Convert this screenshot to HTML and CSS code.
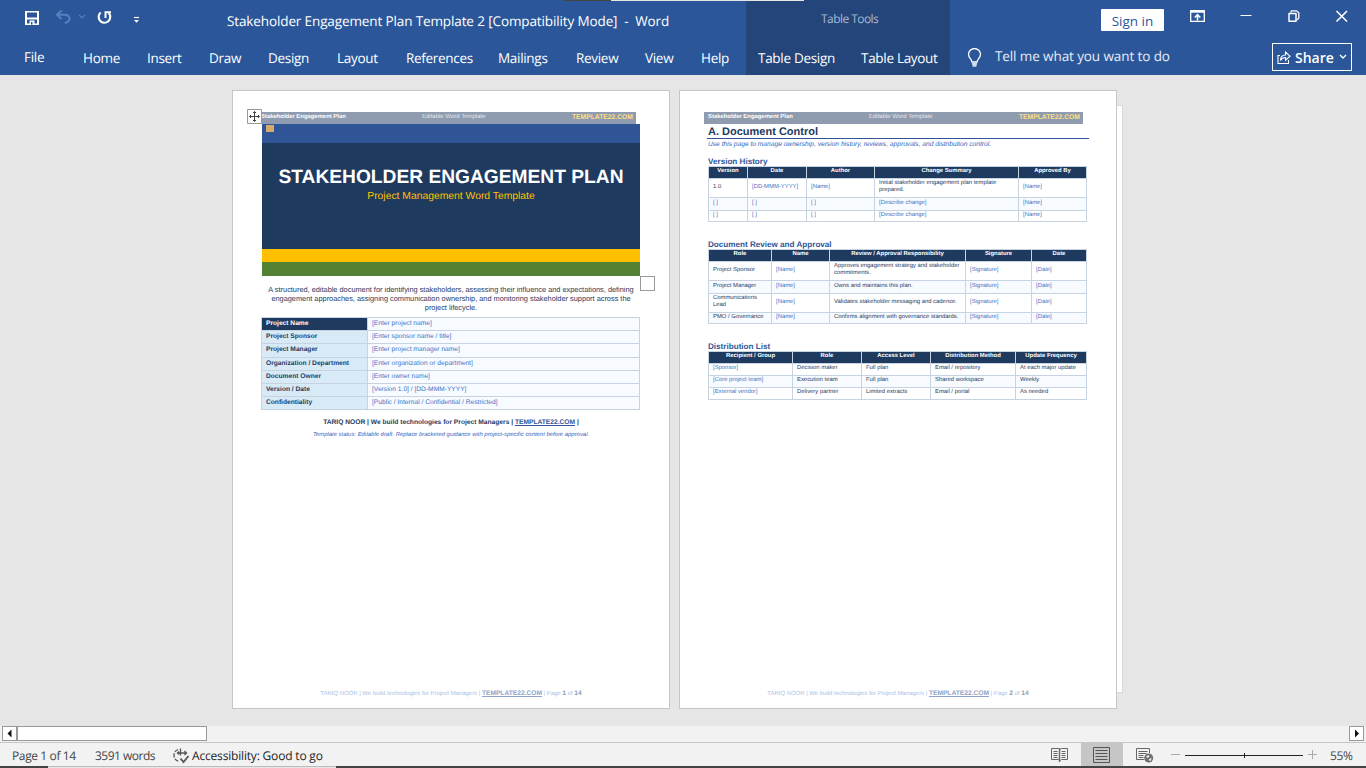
FILE: index.html
```html
<!DOCTYPE html>
<html lang="en">
<head>
<meta charset="utf-8">
<title>Stakeholder Engagement Plan Template 2 - Word</title>
<link rel="stylesheet" href="styles.css">
</head>
<body>
<div class="app">
  <header class="ribbon">
    <div class="top-strip"></div>
    <div class="main-zone">
      <div class="title-row">
        <svg class="qat" width="130" height="36" viewBox="0 0 130 36" fill="none">
          <path fill="#fff" fill-rule="evenodd" d="M2 11h14v14H2zM4 12.500v5h10v-5zM4 19.500v4h2.500v-3h5v3H14v-4zM8 22v2.500h1.500V22z"/>
          <g stroke="#5580bf"><path d="M38.500 10.500l-4.500 4.300 4.500 4.200M34.500 14.800h7c5.500 0 6.500 5 3 7l-2.500 1.500" stroke-width="2"/><path d="M56 15l3 3 3-3" stroke-width="1.200"/></g>
          <path d="M77.700 12.500a5.800 5.800 0 1 0 8 .5" stroke="#fff" stroke-width="2.100"/><path d="M82.500 18v-5.800h5.500" stroke="#fff" stroke-width="2"/>
          <path d="M111 17.500h5" stroke="#fff" stroke-width="1.200"/><path d="M111 20h5l-2.500 2.800z" fill="#fff"/>
        </svg>
        <div class="doc-title">Stakeholder Engagement Plan Template 2 [Compatibility Mode]&nbsp; -&nbsp; Word</div>
      </div>
      <nav class="tabs"><span class="file">File</span><span>Home</span><span>Insert</span><span>Draw</span><span>Design</span><span>Layout</span><span>References</span><span>Mailings</span><span>Review</span><span>View</span><span>Help</span></nav>
    </div>
    <div class="context-zone">
      <div class="context-title">Table Tools</div>
      <nav class="tabs context-tabs"><span>Table Design</span><span>Table Layout</span></nav>
    </div>
    <div class="right-zone">
      <div class="window-row">
        <button class="sign-in">Sign in</button>
        <svg class="window-icons" width="170" height="32" viewBox="0 0 170 32" fill="none" stroke="#fff">
          <path d="M.7 10.700h13.600v10.600H.7z" stroke-width="1.300"/><path d="M1 11.500h13" stroke-width="2.400"/><path d="M7.500 20.500v-5M4.700 17.500l2.800-2.800 2.800 2.800" stroke-width="1.600"/>
          <path d="M50.500 15.500h11"/>
          <path d="M99 13.500h7v7.700h-7z" stroke-width="1.500" stroke-linejoin="round"/><path d="M100.500 12.500l1-1.700h5l2.300 2v5.500l-2 1.700" stroke-width="1.300"/>
          <path d="M146.500 11l10.500 10.500M157 11l-10.500 10.500" stroke-width="1.600"/>
        </svg>
      </div>
      <div class="tell-row">
        <svg width="15" height="20" viewBox="0 0 15 20" fill="none" stroke="#fff" stroke-width="1.300"><path d="M5 14c0-3-3.500-4-3.500-7.500a6 6 0 0 1 12 0C13.500 10 10 11 10 14z"/><path d="M5 15.700h5M5.500 17.700h4" stroke-width="2" stroke="#d0dbec"/></svg>
        <span class="tell">Tell me what you want to do</span>
        <button class="share">
          <svg width="14" height="14" viewBox="0 0 14 14" fill="none" stroke="#fff" stroke-width="1.100"><path d="M3 5.500H1v8h10.500V10"/><path d="M3.500 10.500c0-4 2-5.500 5-5.500V2l4.500 4.200-4.500 4V7.500c-2.500 0-4 1-5 3z"/></svg>
          <span>Share</span>
          <svg width="8" height="8" viewBox="0 0 8 8" fill="none" stroke="#fff" stroke-width="1.300"><path d="M1 2l3 3 3-3"/></svg>
        </button>
      </div>
    </div>
  </header>

  <main class="workspace">
    <div class="page">
      <div class="band"><b>Stakeholder Engagement Plan</b><span>Editable Word Template</span><b class="brand">TEMPLATE22.COM</b></div>
      <div class="cover">
        <div class="cover-blue"><i></i></div>
        <div class="cover-navy"><h1>STAKEHOLDER ENGAGEMENT PLAN</h1><p>Project Management Word Template</p></div>
        <div class="cover-yellow"></div>
        <div class="cover-green"></div>
        <svg class="move-handle" width="15" height="15" viewBox="0 0 15 15" fill="none" stroke="#444"><path d="M.5.500h14v14H.5z" fill="#fff" stroke="#999"/><path d="M7.500 2.500v10M2.500 7.500h10M6 4l1.500-1.500L9 4M6 11l1.500 1.500L9 11M4 6L2.500 7.500 4 9M11 6l1.500 1.500L11 9"/></svg>
        <div class="size-handle"></div>
      </div>
      <p class="intro">A structured, editable document for identifying stakeholders, assessing their influence and expectations, defining<br>engagement approaches, assigning communication ownership, and monitoring stakeholder support across the<br>project lifecycle.</p>
      <div class="info">
        <b class="dark">Project Name</b><span>[Enter project name]</span>
        <b>Project Sponsor</b><span>[Enter sponsor name / title]</span>
        <b>Project Manager</b><span>[Enter project manager name]</span>
        <b>Organization / Department</b><span>[Enter organization or department]</span>
        <b>Document Owner</b><span>[Enter owner name]</span>
        <b>Version / Date</b><span>[Version 1.0] / [DD-MMM-YYYY]</span>
        <b>Confidentiality</b><span>[Public / Internal / Confidential / Restricted]</span>
      </div>
      <p class="signature">TARIQ NOOR | We build technologies for Project Managers | <u>TEMPLATE22.COM</u> |</p>
      <p class="status-note">Template status: Editable draft. Replace bracketed guidance with project-specific content before approval.</p>
      <div class="page-foot">TARIQ NOOR | We build technologies for Project Managers | <u>TEMPLATE22.COM</u> | Page <b>1</b> of <b>14</b></div>
    </div>

    <div class="page">
      <div class="band"><b>Stakeholder Engagement Plan</b><span>Editable Word Template</span><b class="brand">TEMPLATE22.COM</b></div>
      <h2 class="section">A. Document Control</h2>
      <p class="note">Use this page to manage ownership, version history, reviews, approvals, and distribution control.</p>
      <h3 class="first">Version History</h3>
      <div class="grid versions">
        <b>Version</b><b>Date</b><b>Author</b><b>Change Summary</b><b>Approved By</b>
        <span>1.0</span><span class="ph">[DD-MMM-YYYY]</span><span class="ph">[Name]</span><span class="two">Initial stakeholder engagement plan template prepared.</span><span class="ph">[Name]</span>
        <span class="ph alt">[ ]</span><span class="ph alt">[ ]</span><span class="ph alt">[ ]</span><span class="ph alt">[Describe change]</span><span class="ph alt">[Name]</span>
        <span class="ph">[ ]</span><span class="ph">[ ]</span><span class="ph">[ ]</span><span class="ph">[Describe change]</span><span class="ph">[Name]</span>
      </div>
      <h3>Document Review and Approval</h3>
      <div class="grid reviews">
        <b>Role</b><b>Name</b><b>Review / Approval Responsibility</b><b>Signature</b><b>Date</b>
        <span>Project Sponsor</span><span class="ph">[Name]</span><span class="two">Approves engagement strategy and stakeholder commitments.</span><span class="ph">[Signature]</span><span class="ph">[Date]</span>
        <span class="alt">Project Manager</span><span class="ph alt">[Name]</span><span class="alt">Owns and maintains this plan.</span><span class="ph alt">[Signature]</span><span class="ph alt">[Date]</span>
        <span class="two">Communications Lead</span><span class="ph">[Name]</span><span>Validates stakeholder messaging and cadence.</span><span class="ph">[Signature]</span><span class="ph">[Date]</span>
        <span class="alt">PMO / Governance</span><span class="ph alt">[Name]</span><span class="alt">Confirms alignment with governance standards.</span><span class="ph alt">[Signature]</span><span class="ph alt">[Date]</span>
      </div>
      <h3>Distribution List</h3>
      <div class="grid recipients">
        <b>Recipient / Group</b><b>Role</b><b>Access Level</b><b>Distribution Method</b><b>Update Frequency</b>
        <span class="ph">[Sponsor]</span><span>Decision maker</span><span>Full plan</span><span>Email / repository</span><span>At each major update</span>
        <span class="ph alt">[Core project team]</span><span class="alt">Execution team</span><span class="alt">Full plan</span><span class="alt">Shared workspace</span><span class="alt">Weekly</span>
        <span class="ph">[External vendor]</span><span>Delivery partner</span><span>Limited extracts</span><span>Email / portal</span><span>As needed</span>
      </div>
      <div class="page-foot">TARIQ NOOR | We build technologies for Project Managers | <u>TEMPLATE22.COM</u> | Page <b>2</b> of <b>14</b></div>
    </div>
    <div class="next-page"></div>
  </main>

  <div class="scrollbar">
    <div class="arrow"><svg width="13" height="13" viewBox="0 0 13 13"><path d="M8.500 2.500v8L4.500 6.500z" fill="#111"/></svg></div>
    <div class="thumb"></div>
    <div class="track"></div>
    <div class="arrow"><svg width="13" height="13" viewBox="0 0 13 13"><path d="M5 2.500v8l4-4z" fill="#111"/></svg></div>
  </div>

  <footer class="statusbar">
    <span class="s-page">Page 1 of 14</span>
    <span class="s-words">3591 words</span>
    <svg class="s-icon" width="18" height="17" viewBox="0 0 18 17" fill="none" stroke="#555" stroke-width="1.300"><path d="M5 1.500C2.500 2.500 1 4.500 1 7.500c0 3 2 5.200 5 5.700" stroke-dasharray="4 1.500"/><path d="M7.500.500v7M5 5h8M6 3.500L4.500 5 6 6.500M11.500 3L13.500 5l-2 2"/><path d="M7.500 10.500l3 3.500 5-6" stroke-width="1.800"/></svg>
    <span class="s-access">Accessibility: Good to go</span>
    <div class="views">
      <svg class="read" width="18" height="16" viewBox="0 0 18 16" fill="none" stroke="#666"><path d="M.5 1.500h7l1.500 1 1.500-1h6v11h-6l-1.500 1-1.500-1h-7zM2.500 4.500h4M2.500 6.500h4M2.500 8.500h4M2.500 10.500h4M10.500 4.500h4M10.500 6.500h4M10.500 8.500h4M10.500 10.500h4"/><path d="M8.500 1v14" stroke-width="1.400"/></svg>
      <div class="selected"><svg width="17" height="16" viewBox="0 0 17 16" fill="none" stroke="#555"><path d="M.5.500h16v15H.5zM2.500 3.500h12M2.500 6.500h12M2.500 9.500h12M2.500 12.500h12"/></svg></div>
      <svg class="web" width="18" height="16" viewBox="0 0 18 16" fill="none" stroke="#666"><path d="M8 12.500H.5V1.500h13V6M2.500 4.500h9M2.500 6.500h8M2.500 8.500h5M2.500 10.500h5"/><circle cx="12.700" cy="11" r="4.500" fill="#707070" stroke="none"/><path d="M10 9.500l2.500-1.500 1 1.500-2 1.500zM13 12l2.500-1-.5 2.500-1.500.5z" fill="#f2f2f2" stroke="none"/></svg>
      <svg class="slider" width="148" height="16" viewBox="0 0 148 16" fill="none"><path d="M1 7.500h9M138 7.500h9M142.500 3v9" stroke="#aaa"/><path d="M15 8.500h118M74.500 6v5" stroke="#222"/></svg>
      <span class="pct">55%</span>
    </div>
  </footer>
  <div class="taskbar-edge"><i></i></div>
</div>
</body>
</html>
```
FILE: styles.css
```css
* { box-sizing: border-box; margin: 0; padding: 0; }
body { width: 1366px; height: 768px; overflow: hidden; font-family: "Open Sans", "Noto Sans", sans-serif; text-rendering: geometricPrecision; }
button { font: inherit; border: 0; }
svg { display: block; flex: none; }
.app { display: flex; flex-direction: column; height: 768px; }

.ribbon { position: relative; display: flex; height: 75px; background: #2b579a; color: #fff; }
.top-strip { position: absolute; left: 563px; top: 0; width: 241px; height: 1px; background: linear-gradient(90deg, #444 48px, #e6e6e6 48px); }
.main-zone { width: 746px; }
.title-row { display: flex; height: 42px; }
.qat { margin-left: 23px; }
.doc-title { margin-left: 74px; line-height: 42px; font-size: 13.500px; letter-spacing: -0.120px; white-space: nowrap; }
.tabs { display: grid; grid-template-columns: 59px 64px 62px 59px 69px 69px 92px 78px 69px 56px 45px; padding-left: 24px; line-height: 33px; font-size: 13.500px; letter-spacing: -0.300px; white-space: nowrap; }
.file { line-height: 31px; }
.context-zone { width: 204px; background: #234579; }
.context-title { height: 42px; padding-left: 75px; line-height: 38px; font-size: 12px; letter-spacing: -0.550px; color: #a8b9d4; }
.context-tabs { grid-template-columns: 103px 90px; padding-left: 12px; }
.right-zone { flex: 1; }
.window-row { display: flex; height: 42px; padding-left: 151px; }
.sign-in { width: 63px; height: 22px; margin-top: 9px; background: #fff; color: #2b579a; font-size: 13.500px; line-height: 24px; border-radius: 1px; }
.window-icons { margin-left: 26px; }
.tell-row { display: flex; height: 33px; padding-left: 17px; }
.tell-row > svg { margin-top: 6px; }
.tell { width: 277px; margin-left: 13px; line-height: 29px; font-size: 13.500px; letter-spacing: -0.100px; color: #e6ecf5; }
.share { display: flex; align-items: center; width: 80px; height: 28px; margin-top: 1px; padding-left: 4px; border: 1px solid #fff; background: none; color: #fff; font-size: 14px; font-weight: 600; }
.share span { width: 41px; margin: 0 3px 0 4px; text-align: left; }

.workspace { position: relative; display: flex; gap: 9px; height: 651px; padding: 15px 0 0 232px; background: #e6e6e6; font-family: "Liberation Sans", Arial, sans-serif; color: #1f3a5f; }
.page { position: relative; z-index: 1; display: flex; flex-direction: column; width: 438px; height: 619px; padding: 21px 0 0; border: 1px solid #c6c6c6; background: #fff; }
.next-page { position: absolute; left: 1110px; top: 30px; width: 13px; height: 588px; border: 1px solid #dadada; background: #fff; }
.band { display: grid; grid-template-columns: 161px 100px 1fr; width: 379px; height: 12px; margin-left: 24px; padding: 0 3px 0 4px; background: #8f9caf; color: #fff; font-size: 5.900px; line-height: 10px; white-space: nowrap; }
.band span { color: #e4e8ee; font-size: 6px; }
.band .brand { text-align: right; font-size: 6.750px; line-height: 11px; color: #ffdf80; }

.cover { position: relative; width: 378px; height: 152px; margin-left: 29px; text-align: center; }
.cover-blue { height: 19px; padding: 1px 4px; background: #2f5597; }
.cover-blue i { display: block; width: 8px; height: 7px; background: #d3ac6b; }
.cover-navy { height: 106px; padding-top: 23px; background: #1f3a5f; color: #fff; }
.cover-navy h1 { font-size: 19.200px; line-height: 23px; white-space: nowrap; }
.cover-navy p { font-size: 10.350px; line-height: 15px; color: #ffc000; }
.cover-yellow { height: 13px; background: #ffc000; }
.cover-green { height: 14px; background: #548235; }
.move-handle { position: absolute; left: -15px; top: -15px; }
.size-handle { position: absolute; left: 378px; top: 152px; width: 15px; height: 15px; border: 1px solid #999; background: #fff; }
.intro { width: 378px; margin: 9px 0 5px 29px; text-align: center; font-size: 7.370px; line-height: 9px; white-space: nowrap; }
.info { display: grid; grid-template-columns: 105px 271px; grid-template-rows: 12px 12px 13px 12px 12px 12px 12px; gap: 1px; width: 379px; margin-left: 28px; padding: 1px; background: #c8d3e1; font-size: 6.650px; line-height: 11px; white-space: nowrap; }
.info b { padding-left: 4px; background: #d9eaf7; }
.info b.dark { background: #1f3a5f; color: #fff; }
.info span { padding-left: 4px; background: #f7faff; color: #4472c4; }
.signature { width: 378px; margin: 7px 0 2px 29px; text-align: center; font-size: 6.670px; font-weight: 700; line-height: 11px; white-space: nowrap; }
.signature u { color: #2f5597; }
.status-note { width: 378px; margin-left: 29px; text-align: center; font-size: 5.920px; font-style: italic; line-height: 10px; color: #2f66c0; white-space: nowrap; }
.page-foot { margin-top: auto; width: 378px; margin-left: 29px; padding-bottom: 9px; text-align: center; font-size: 5.950px; line-height: 10px; color: #a9bfe5; white-space: nowrap; }
.page-foot u, .page-foot b { font-size: 6.650px; font-weight: 700; color: #8fa3c8; }
.page-foot b { color: #8f9caf; }

.section { width: 382px; height: 15px; margin-left: 27px; padding-left: 1px; border-bottom: 1px solid #2f5597; font-size: 11px; line-height: 16px; }
.note { height: 10px; margin-left: 28px; font-size: 6.650px; font-style: italic; line-height: 11px; color: #2f66c0; white-space: nowrap; }
h3 { height: 10px; margin: 17px 0 0 28px; font-size: 8.120px; line-height: 11px; color: #2f5597; }
h3.first { margin-top: 7px; }
.grid { display: grid; gap: 1px; width: 379px; margin-left: 28px; padding: 1px; background: #c8d3e1; font-size: 5.900px; line-height: 7px; }
.grid b { overflow: hidden; background: #1f3a5f; color: #fff; text-align: center; line-height: 8px; white-space: nowrap; }
.grid span { display: flex; align-items: center; padding: 0 2px 2px 4px; background: #fff; }
.grid .two { padding-bottom: 3px; }
.grid .ph { color: #4472c4; }
.grid .alt { background: #f7faff; }
.versions { grid-template-columns: 38px 58px 67px 143px 67px; grid-template-rows: 11px 18px 12px 10px; }
.reviews { grid-template-columns: 62px 57px 135px 65px 54px; grid-template-rows: 11px 18px 12px 18px 10px; }
.recipients { grid-template-columns: 83px 68px 68px 84px 70px; grid-template-rows: 11px 11px 11px 11px; }
.recipients span { padding-bottom: 3px; }

.scrollbar { display: flex; height: 16px; padding: 0 2px; background: #f2f2f2; }
.arrow { width: 15px; height: 15px; border: 1px solid #999; background: #fff; }
.thumb { width: 190px; height: 15px; border: 1px solid #999; background: #fff; }
.track { flex: 1; }
.statusbar { display: flex; height: 24px; border-top: 1px solid #c6c6c6; background: #f2f2f2; color: #444; font-size: 12px; line-height: 25px; letter-spacing: -0.380px; white-space: nowrap; }
.s-page { width: 83px; margin-left: 12px; }
.s-words { width: 78px; letter-spacing: -0.500px; }
.s-icon { margin-top: 5px; }
.s-access { margin-left: 1px; line-height: 26px; letter-spacing: -0.180px; color: #222; }
.views { display: flex; margin-left: auto; }
.read { margin-top: 4px; }
.selected { width: 42px; padding: 4px 12px; margin-left: 12px; background: #c6c6c6; }
.web { margin: 4px 0 0 13px; }
.slider { margin: 4px 0 0 16px; }
.pct { width: 36px; margin-left: 12px; }
.taskbar-edge { height: 2px; background: #444; }
.taskbar-edge i { display: block; width: 288px; height: 2px; margin-left: 48px; background: #e6e6e6; border-top: 1px solid #bbb; }
```
